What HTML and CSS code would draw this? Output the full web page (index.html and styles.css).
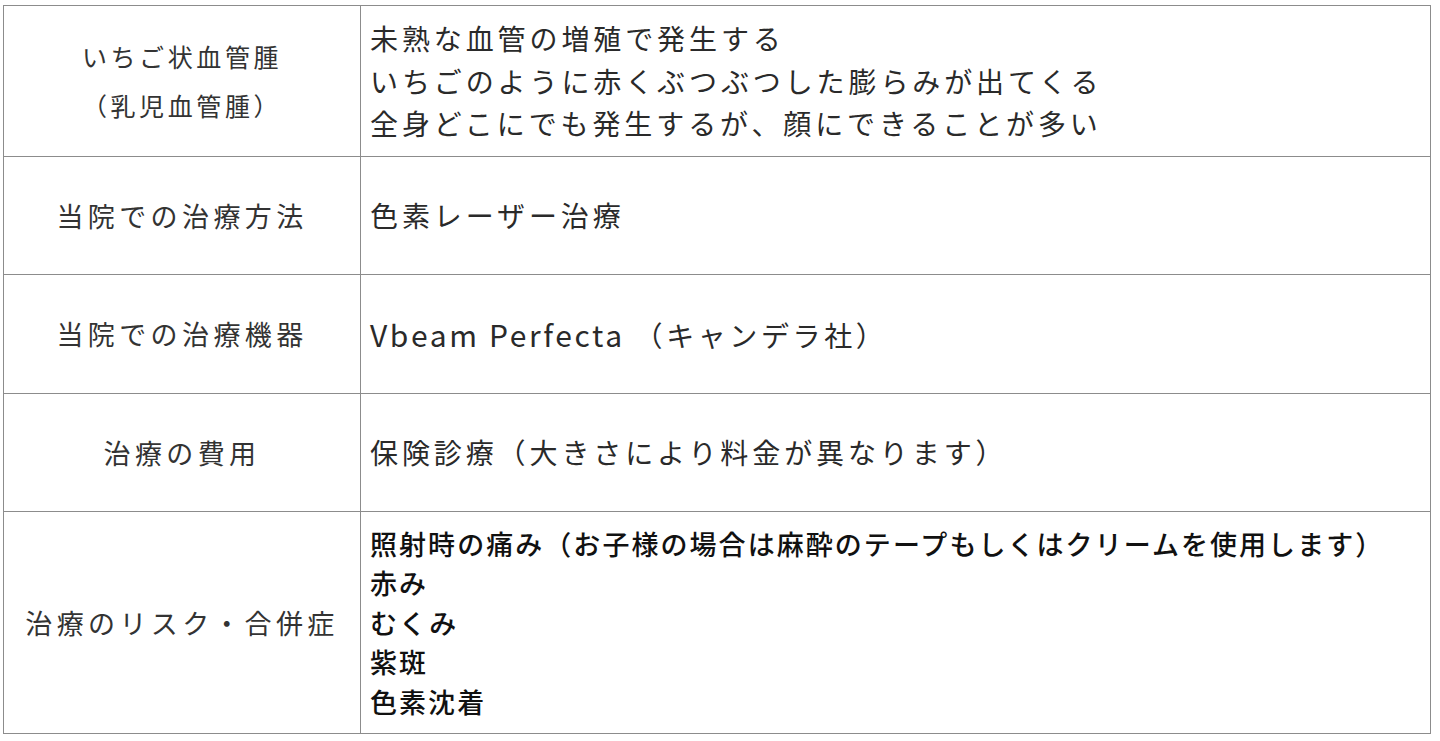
FILE: index.html
```html
<!DOCTYPE html>
<html lang="ja">
<head>
<meta charset="utf-8">
<title>いちご状血管腫</title>
<link rel="stylesheet" href="styles.css">
</head>
<body>
<table class="info">
  <tr class="r1">
    <th class="head head-small">いちご状血管腫<br>（乳児血管腫）</th>
    <td class="body body-wide">未熟な血管の増殖で発生する<br>いちごのように赤くぶつぶつした膨らみが出てくる<br>全身どこにでも発生するが、顔にできることが多い</td>
  </tr>
  <tr class="r2">
    <th class="head">当院での治療方法</th>
    <td class="body body-wide">色素レーザー治療</td>
  </tr>
  <tr class="r3">
    <th class="head">当院での治療機器</th>
    <td class="body body-device"><span class="latin">Vbeam Perfecta</span> （キャンデラ社）</td>
  </tr>
  <tr class="r4">
    <th class="head">治療の費用</th>
    <td class="body body-wide">保険診療（大きさにより料金が異なります）</td>
  </tr>
  <tr class="r5">
    <th class="head">治療のリスク・合併症</th>
    <td class="body body-risk">照射時の痛み（お子様の場合は麻酔のテープもしくはクリームを使用します）<br>赤み<br>むくみ<br>紫斑<br>色素沈着</td>
  </tr>
</table>
</body>
</html>
```

FILE: styles.css
```css
html, body {
  margin: 0;
  background: #ffffff;
}
body {
  padding: 5px 0 0 3px;
  font-family: "Noto Sans CJK JP", "Noto Sans", sans-serif;
  color: #2a2a2a;
}
.info {
  border-collapse: collapse;
  width: 1428px;
  table-layout: fixed;
}
.info th,
.info td {
  border: 1px solid #8c8c8c;
  padding: 0;
  vertical-align: middle;
}
.head {
  width: 356px;
  text-align: center;
  font-weight: 400;
  color: #333333;
  font-size: 27px;
  letter-spacing: 4.4px;
  line-height: 40px;
  white-space: nowrap;
}
.head-small {
  font-size: 25px;
  letter-spacing: 3.6px;
  line-height: 49px;
}
.body {
  text-align: left;
  padding-left: 9px !important;
  font-weight: 400;
  white-space: nowrap;
}
.body-wide {
  font-size: 28px;
  letter-spacing: 3.9px;
  line-height: 42.5px;
}
.body-device {
  font-size: 28px;
  letter-spacing: 3.6px;
  line-height: 40px;
}
.latin {
  font-family: "Noto Sans CJK JP", sans-serif;
  font-size: 30px;
  letter-spacing: 2.6px;
}
.body-risk {
  font-size: 27px;
  font-weight: 500;
  letter-spacing: 2.05px;
  line-height: 39.5px;
  color: #111111;
}
.r1 { height: 151px; }
.r2 { height: 118px; }
.r3 { height: 119px; }
.r4 { height: 118px; }
.r5 { height: 222px; }
```
